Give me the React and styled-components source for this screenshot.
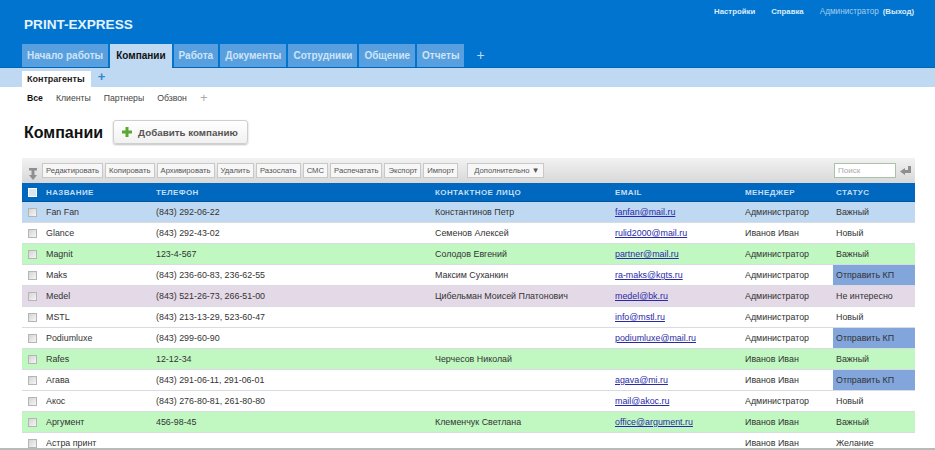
import React from 'react';
import styled, { createGlobalStyle } from 'styled-components';

const GlobalStyle = createGlobalStyle`
  html, body {
    margin: 0;
    padding: 0;
    background: #fff;
    overflow: hidden;
  }
  body {
    font-family: "Liberation Sans", Arial, sans-serif;
    font-size: 10px;
    color: #222;
  }
`;

const Page = styled.div`
  height: 450px;
  display: flex;
  flex-direction: column;
  overflow: hidden;
  box-sizing: border-box;
  border-bottom: 2px solid #b9b9b9;
`;

const Header = styled.header`
  height: 68px;
  flex: none;
  box-sizing: border-box;
  background: #0074cf;
  border-bottom: 1px solid #0067b8;
  padding: 0 22px;
  display: flex;
  flex-direction: column;
  justify-content: space-between;
`;

const TopRow = styled.div`
  display: flex;
  justify-content: space-between;
  align-items: flex-start;
`;

const Logo = styled.div`
  margin: 16px 0 0 2px;
  font-size: 13.6px;
  line-height: 17px;
  font-weight: bold;
  color: #e6f2fb;
`;

const UserMenu = styled.div`
  display: flex;
  gap: 16px;
  margin: 6px -1px 0 0;
  font-size: 7.8px;
  line-height: 11px;
  font-weight: bold;
  color: #dcecf9;
`;

const UserName = styled.span`
  font-size: 8.2px;
  font-weight: normal;
  color: #a5cdee;
`;

const UserExit = styled.span`
  margin-left: 4px;
  color: #dcecf9;
`;

const Tabs = styled.nav`
  display: flex;
  align-items: flex-end;
  gap: 2px;
`;

const Tab = styled.div`
  height: ${(p) => (p.$active ? '24px' : '23px')};
  margin-bottom: ${(p) => (p.$active ? '-1px' : '0')};
  box-sizing: border-box;
  padding: ${(p) => (p.$active ? '5px 6px 0' : '5px 5px 0')};
  font-size: 10px;
  line-height: 14px;
  font-weight: bold;
  white-space: nowrap;
  background: ${(p) => (p.$active ? '#c0d9f2' : '#579fdf')};
  color: ${(p) => (p.$active ? '#111' : '#cfe4f7')};
`;

const TabPlus = styled.div`
  margin: 0 0 5px 10px;
  font-size: 14px;
  line-height: 14px;
  color: #bcdaf3;
`;

const SubNav = styled.div`
  height: 19px;
  flex: none;
  box-sizing: border-box;
  background: #c0d9f2;
  padding: 3px 22px 0;
  display: flex;
  align-items: flex-start;
`;

const SubTab = styled.div`
  height: 16px;
  box-sizing: border-box;
  background: #fff;
  padding: 2px 6px 0 5px;
  font-size: 9px;
  line-height: 12px;
  font-weight: bold;
  color: #222;
`;

const SubPlus = styled.div`
  margin: -1px 0 0 7px;
  font-size: 13px;
  line-height: 14px;
  font-weight: bold;
  color: #2f86cf;
`;

const Filters = styled.div`
  flex: none;
  height: 21px;
  box-sizing: border-box;
  padding: 5px 0 0 27px;
  display: flex;
  gap: 13px;
  font-size: 8.7px;
  line-height: 13px;
  color: #444;
`;

const FilterActive = styled.span`
  color: #111;
  font-weight: bold;
`;

const FilterPlus = styled.span`
  font-size: 13px;
  line-height: 11px;
  color: #aaa;
`;

const TitleRow = styled.div`
  flex: none;
  height: 50px;
  box-sizing: border-box;
  padding: 12px 0 0 24px;
  display: flex;
  align-items: flex-start;
  gap: 10px;
`;

const Title = styled.h1`
  margin: 2px 0 0;
  font-size: 16px;
  line-height: 22px;
  font-weight: bold;
  color: #111;
`;

const AddButton = styled.button`
  width: 135px;
  height: 24px;
  box-sizing: border-box;
  padding: 0 0 0 7px;
  display: flex;
  align-items: center;
  gap: 5px;
  border: 1px solid #cfcfcf;
  border-radius: 3px;
  background: linear-gradient(#fff, #f1f1f1);
  box-shadow: 0 1px 2px rgba(0, 0, 0, 0.25);
  font-family: inherit;
  font-size: 9.8px;
  font-weight: bold;
  color: #555;
`;

const Section = styled.div`
  margin: 0 20px 0 22px;
`;

const Toolbar = styled.div`
  height: 25px;
  box-sizing: border-box;
  padding: 5px 4px 0 5px;
  display: flex;
  align-items: flex-start;
  background: linear-gradient(#f2f2f2, #d8d8d8);
`;

const SortIcon = styled.svg`
  width: 10px;
  height: 12px;
  margin: 5px 4px 0 1px;
  flex: none;
`;

const ActionGroup = styled.div`
  display: flex;
  gap: 2px;
`;

const ActionButton = styled.div`
  height: 15px;
  box-sizing: border-box;
  padding: 0 3px;
  border: 1px solid #c8c8c8;
  background: #f7f7f7;
  font-size: 7.7px;
  line-height: 13px;
  color: #555;
  white-space: nowrap;
`;

const MoreButton = styled(ActionButton)`
  margin-left: 9px;
  padding: 0 6px;
  width: 77px;
  text-align: center;
`;

const SearchBox = styled.div`
  margin-left: auto;
  width: 62px;
  height: 15px;
  box-sizing: border-box;
  border: 1px solid #a9c3a9;
  background: #fff;
  padding-left: 3px;
  font-size: 8px;
  line-height: 13px;
  color: #aaa;
`;

const EnterIcon = styled.svg`
  width: 11px;
  height: 9px;
  margin: 3px 0 0 4px;
  flex: none;
`;

const Table = styled.table`
  width: 893px;
  border-collapse: separate;
  border-spacing: 0;
  table-layout: fixed;
`;

const HeadCell = styled.th`
  height: 19px;
  padding: 0 0 0 ${(p) => p.$pad || 0}px;
  background: #0068bf;
  border-bottom: 1px solid #00569e;
  box-sizing: border-box;
  text-align: left;
  font-size: 8px;
  letter-spacing: 0.4px;
  font-weight: bold;
  color: #c3def5;
`;

const rowColors = {
  blue: '#c0d9f2',
  green: '#c1f8c1',
  purple: '#e4d9e6',
  white: '#fff',
};

const Row = styled.tr`
  background: ${(p) => rowColors[p.$tone]};
`;

const Cell = styled.td`
  height: 21px;
  box-sizing: border-box;
  padding: 0 0 0 ${(p) => p.$pad || 0}px;
  border-bottom: 1px solid #d8dbe0;
  font-size: 8.9px;
  color: #333;
  white-space: nowrap;
  overflow: hidden;
  background: ${(p) => (p.$send ? '#82a5dc' : 'transparent')};
`;

const Box = styled.span`
  display: block;
  width: 9px;
  height: 9px;
  margin-left: 6px;
  box-sizing: border-box;
  border: 1px solid ${(p) => (p.$head ? '#fff' : '#b5b5b5')};
  background: ${(p) => (p.$head ? '#dbe5ee' : 'linear-gradient(135deg, #d4d4d4, #f6f6f6)')};
`;

const Mail = styled.a`
  color: #2a2aa8;
  text-decoration: underline;
`;

const columns = [
  { width: 24 },
  { width: 110, title: 'НАЗВАНИЕ' },
  { width: 279, title: 'ТЕЛЕФОН' },
  { width: 180, title: 'КОНТАКТНОЕ ЛИЦО' },
  { width: 130, title: 'EMAIL' },
  { width: 88, title: 'МЕНЕДЖЕР' },
  { width: 82, title: 'СТАТУС', pad: 3 },
];

const actions = ['Редактировать', 'Копировать', 'Архивировать', 'Удалить', 'Разослать', 'СМС', 'Распечатать', 'Экспорт', 'Импорт'];

const companies = [
  { tone: 'blue', name: 'Fan Fan', phone: '(843) 292-06-22', contact: 'Константинов Петр', email: 'fanfan@mail.ru', manager: 'Администратор', status: 'Важный' },
  { tone: 'white', name: 'Glance', phone: '(843) 292-43-02', contact: 'Семенов Алексей', email: 'rulid2000@mail.ru', manager: 'Иванов Иван', status: 'Новый' },
  { tone: 'green', name: 'Magnit', phone: '123-4-567', contact: 'Солодов Евгений', email: 'partner@mail.ru', manager: 'Администратор', status: 'Важный' },
  { tone: 'white', name: 'Maks', phone: '(843) 236-60-83, 236-62-55', contact: 'Максим Суханкин', email: 'ra-maks@kgts.ru', manager: 'Администратор', status: 'Отправить КП' },
  { tone: 'purple', name: 'Medel', phone: '(843) 521-26-73, 266-51-00', contact: 'Цибельман Моисей Платонович', email: 'medel@bk.ru', manager: 'Администратор', status: 'Не интересно' },
  { tone: 'white', name: 'MSTL', phone: '(843) 213-13-29, 523-60-47', contact: '', email: 'info@mstl.ru', manager: 'Администратор', status: 'Новый' },
  { tone: 'white', name: 'Podiumluxe', phone: '(843) 299-60-90', contact: '', email: 'podiumluxe@mail.ru', manager: 'Администратор', status: 'Отправить КП' },
  { tone: 'green', name: 'Rafes', phone: '12-12-34', contact: 'Черчесов Николай', email: '', manager: 'Иванов Иван', status: 'Важный' },
  { tone: 'white', name: 'Агава', phone: '(843) 291-06-11, 291-06-01', contact: '', email: 'agava@mi.ru', manager: 'Иванов Иван', status: 'Отправить КП' },
  { tone: 'white', name: 'Акос', phone: '(843) 276-80-81, 261-80-80', contact: '', email: 'mail@akoc.ru', manager: 'Администратор', status: 'Новый' },
  { tone: 'green', name: 'Аргумент', phone: '456-98-45', contact: 'Клеменчук Светлана', email: 'office@argument.ru', manager: 'Иванов Иван', status: 'Важный' },
  { tone: 'white', name: 'Астра принт', phone: '', contact: '', email: '', manager: 'Иванов Иван', status: 'Желание' },
];

const App = () => (
  <Page>
    <GlobalStyle />
    <Header>
      <TopRow>
        <Logo>PRINT-EXPRESS</Logo>
        <UserMenu>
          <span>Настройки</span>
          <span>Справка</span>
          <span>
            <UserName>Администратор</UserName>
            <UserExit>(Выход)</UserExit>
          </span>
        </UserMenu>
      </TopRow>
      <Tabs>
        <Tab>Начало работы</Tab>
        <Tab $active>Компании</Tab>
        <Tab>Работа</Tab>
        <Tab>Документы</Tab>
        <Tab>Сотрудники</Tab>
        <Tab>Общение</Tab>
        <Tab>Отчеты</Tab>
        <TabPlus>+</TabPlus>
      </Tabs>
    </Header>
    <SubNav>
      <SubTab>Контрагенты</SubTab>
      <SubPlus>+</SubPlus>
    </SubNav>
    <Filters>
      <FilterActive>Все</FilterActive>
      <span>Клиенты</span>
      <span>Партнеры</span>
      <span>Обзвон</span>
      <FilterPlus>+</FilterPlus>
    </Filters>
    <TitleRow>
      <Title>Компании</Title>
      <AddButton>
        <svg width="12" height="12" viewBox="0 0 12 12">
          <path d="M4.5 1h3v3.500H11v3H7.500V11h-3V7.500H1v-3h3.500z" fill="#5aa832" />
        </svg>
        Добавить компанию
      </AddButton>
    </TitleRow>
    <Section>
      <Toolbar>
        <SortIcon viewBox="0 0 10 12">
          <path d="M1 0h8v2.500H6.500V7H9l-4 5-4-5h2.500V2.500H1z" fill="#8f8f8f" />
        </SortIcon>
        <ActionGroup>
          {actions.map((action) => (
            <ActionButton key={action}>{action}</ActionButton>
          ))}
        </ActionGroup>
        <MoreButton>Дополнительно ▼</MoreButton>
        <SearchBox>Поиск</SearchBox>
        <EnterIcon viewBox="0 0 11 9">
          <path d="M8 0h3v7H5v2L0 5.500 5 2v2h3z" fill="#8f8f8f" />
        </EnterIcon>
      </Toolbar>
      <Table>
        <colgroup>
          {columns.map((col, i) => (
            <col key={i} style={{ width: col.width }} />
          ))}
        </colgroup>
        <thead>
          <tr>
            <HeadCell>
              <Box $head />
            </HeadCell>
            {columns.slice(1).map((col) => (
              <HeadCell key={col.title} $pad={col.pad}>
                {col.title}
              </HeadCell>
            ))}
          </tr>
        </thead>
        <tbody>
          {companies.map((c) => (
            <Row key={c.name} $tone={c.tone}>
              <Cell>
                <Box />
              </Cell>
              <Cell>{c.name}</Cell>
              <Cell>{c.phone}</Cell>
              <Cell>{c.contact}</Cell>
              <Cell>{c.email && <Mail href="#">{c.email}</Mail>}</Cell>
              <Cell>{c.manager}</Cell>
              <Cell $pad={3} $send={c.status === 'Отправить КП'}>
                {c.status}
              </Cell>
            </Row>
          ))}
        </tbody>
      </Table>
    </Section>
  </Page>
);

export default App;
